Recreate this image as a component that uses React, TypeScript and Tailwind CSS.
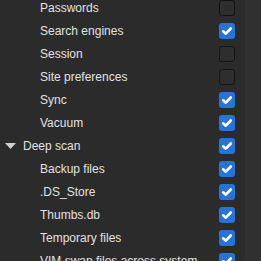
const rows: { label: string; checked: boolean; level: number; expander?: boolean }[] = [
  { label: "Passwords", checked: false, level: 1 },
  { label: "Search engines", checked: true, level: 1 },
  { label: "Session", checked: false, level: 1 },
  { label: "Site preferences", checked: false, level: 1 },
  { label: "Sync", checked: true, level: 1 },
  { label: "Vacuum", checked: true, level: 1 },
  { label: "Deep scan", checked: true, level: 0, expander: true },
  { label: "Backup files", checked: true, level: 1 },
  { label: ".DS_Store", checked: true, level: 1 },
  { label: "Thumbs.db", checked: true, level: 1 },
  { label: "Temporary files", checked: true, level: 1 },
  { label: "VIM swap files across system", checked: true, level: 1 },
];

function CheckBox({ checked }: { checked: boolean }) {
  if (checked) {
    return (
      <div className="w-[16px] h-[16px] rounded-[3px] bg-[#2774d8] flex items-center justify-center">
        <svg width="12" height="12" viewBox="0 0 12 12">
          <path d="M2.2 6.3 L4.8 8.7 L9.8 3.5" fill="none" stroke="#ffffff" strokeWidth="2.6" strokeLinecap="round" strokeLinejoin="round" />
        </svg>
      </div>
    );
  }
  return <div className="w-[16px] h-[16px] rounded-[3px] bg-[#2e2e2e] border border-[#141414]" />;
}

export default function App() {
  return (
    <div className="w-[261px] h-[261px] overflow-hidden flex bg-[#2b2b2b] text-[#e2e2e2] font-['Liberation_Sans',Arial,sans-serif] text-[12px]">
      <div className="w-[245px] flex flex-col mt-[-4px]">
        {rows.map((r) => (
          <div key={r.label} className="h-[23px] shrink-0 flex items-center">
            <div className={r.level === 0 ? "w-[23px] shrink-0 flex pl-[5px]" : "w-[40px] shrink-0"}>
              {r.expander && (
                <svg width="11" height="6" viewBox="0 0 11 6">
                  <path d="M0 0 L11 0 L5.5 6 Z" fill="#d0d0d0" />
                </svg>
              )}
            </div>
            <span className="flex-1 whitespace-nowrap overflow-hidden pt-[1px]">{r.label}</span>
            <div className="w-[26px] shrink-0 flex justify-start">
              <CheckBox checked={r.checked} />
            </div>
          </div>
        ))}
      </div>
      <div className="flex-1 bg-[#303030]" />
    </div>
  );
}
